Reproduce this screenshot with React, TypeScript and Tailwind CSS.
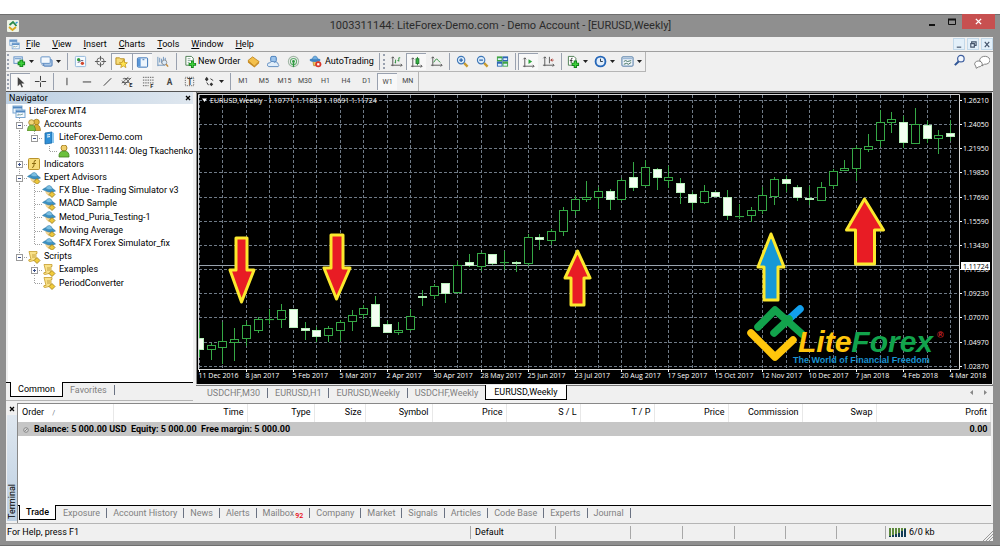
import React from 'react';
import clsx from 'clsx';

const icons: Record<string, React.ReactNode> = {
  newChart: (
    <>
      <rect x="1" y="2" width="9" height="7" fill="#e8f1fa" stroke="#5f8fc4" />
      <path d="M2 4h7" stroke="#5f8fc4" />
      <path d="M9 5v8M5 9h8" stroke="#12801a" strokeWidth="4" />
      <path d="M9 6v6M6 9h6" stroke="#3fd03c" strokeWidth="2" />
    </>
  ),
  profiles: (
    <>
      <rect x="4" y="5" width="9" height="7" rx="1" fill="#a9c6e6" stroke="#4577b5" />
      <rect x="1" y="2" width="10" height="7" rx="1" fill="#f3f8fd" stroke="#5f8fc4" />
      <path d="M2 10l2 2" stroke="#3a6fb0" />
    </>
  ),
  market: (
    <>
      <rect x="1.5" y="1.5" width="11" height="11" rx="1" fill="#f5fafe" stroke="#8fb4da" />
      <circle cx="5" cy="5" r="1.8" fill="#2e9d3d" />
      <circle cx="9" cy="9" r="1.8" fill="#d2452b" />
      <path d="M4 8l3-1M7 6h3" stroke="#557" />
    </>
  ),
  target: (
    <>
      <circle cx="7" cy="7" r="4" fill="none" stroke="#666" />
      <path d="M7 1v5M7 8v5M1 7h5M8 7h5" stroke="#555" />
    </>
  ),
  navigator: (
    <>
      <path d="M1 2h4l1 1h4v6H1z" fill="#f7dd7c" stroke="#b58b1e" />
      <path d="M9 4l1.3 3 3 .3-2.3 2 .8 3.2L9 10.8l-2.8 1.7.8-3.2-2.3-2 3-.3z" fill="#ffe34f" stroke="#bf951a" strokeWidth=".8" />
    </>
  ),
  terminal: (
    <>
      <rect x="1.5" y="2" width="11" height="10" rx="1" fill="#eef5fc" stroke="#2f6cb3" />
      <rect x="2" y="2.5" width="3" height="9" fill="#5a97d8" />
      <path d="M7 4h2" stroke="#2f6cb3" />
    </>
  ),
  tester: (
    <>
      <path d="M2 2v10M2 11h8M4 8V3M6 9V4M8 7V2M10 7V3" stroke="#6c94bd" />
      <circle cx="9" cy="8" r="2.6" fill="#dcebf8" stroke="#8a8f96" />
      <path d="M11 10l2 2.5" stroke="#c28a3b" strokeWidth="1.5" />
    </>
  ),
  order: (
    <>
      <path d="M2 1.5h6l2 2V11H2z" fill="#fff" stroke="#4b7c50" />
      <path d="M4 4h3M4 6h4M4 8h2" stroke="#8a9" />
      <path d="M9 6v8M5 10h8" stroke="#12801a" strokeWidth="3" />
      <path d="M9 7v6M6 10h6" stroke="#3fd03c" strokeWidth="1.5" />
    </>
  ),
  book: (
    <>
      <path d="M1 6l5-4 7 5-5 5z" fill="#f4c04b" stroke="#b37a14" strokeWidth=".8" />
      <path d="M1 6v2l7 5.5L13 9V7l-5 5z" fill="#c8881a" />
    </>
  ),
  cloud: (
    <>
      <rect x="4" y="1.5" width="6" height="6" rx="1.5" fill="#9cc4ec" stroke="#3f78b8" />
      <path d="M2 12.5a2 2 0 0 1 1-4 3 3 0 0 1 5-.5 2.500 2.500 0 0 1 4 2 1.500 1.500 0 0 1 0 2.500z" fill="#e1eefa" stroke="#5a88bd" />
    </>
  ),
  signal: (
    <>
      <circle cx="7" cy="7" r="5.500" fill="none" stroke="#a4b8a8" strokeWidth="1.200" />
      <circle cx="7" cy="7" r="3.300" fill="none" stroke="#5fae6c" strokeWidth="1.200" />
      <circle cx="7" cy="7" r="1.500" fill="#2d9a3f" />
      <path d="M7 8v5" stroke="#2d9a3f" strokeWidth="1.500" />
    </>
  ),
  auto: (
    <>
      <path d="M4 5.500h7l-1 6H5z" fill="#f2c35c" stroke="#a87b1b" strokeWidth=".7" />
      <ellipse cx="6.500" cy="5.500" rx="5.800" ry="2" fill="#3f86c7" />
      <path d="M3.500 5q.5-4 3-4t3 4z" fill="#6faee0" stroke="#2d6ba8" strokeWidth=".5" />
      <circle cx="10" cy="10" r="3.300" fill="#d8372a" />
      <rect x="8.800" y="8.800" width="2.400" height="2.400" fill="#fff" />
    </>
  ),
  bars: (
    <>
      <path d="M3 2v10M1 11h12M1.500 3.500L3 2l1.500 1.500M11.500 9.500L13 11l-1.500 1.500" fill="none" stroke="#555" />
      <path d="M6 9V5M5 8h1M9.500 7V3M8 6h1.500M9.500 3H11" stroke="#2f8f3b" />
    </>
  ),
  candles: (
    <>
      <path d="M3 2v10M1 11h12M1.500 3.500L3 2l1.500 1.500M11.500 9.500L13 11l-1.500 1.500" fill="none" stroke="#555" />
      <path d="M8 1v9" stroke="#1f7a2b" />
      <rect x="6.500" y="3" width="3" height="5" fill="#35b544" stroke="#1f7a2b" />
    </>
  ),
  line: (
    <>
      <path d="M3 2v10M1 11h12M1.500 3.500L3 2l1.500 1.500M11.500 9.500L13 11l-1.500 1.500" fill="none" stroke="#555" />
      <path d="M4 8q3-6 5-2l2 2" fill="none" stroke="#2f8f3b" />
    </>
  ),
  zoomIn: (
    <>
      <path d="M8.500 8.500l4 4" stroke="#c99a2e" strokeWidth="2.500" />
      <circle cx="5.500" cy="5.500" r="4" fill="#dcecfa" stroke="#3f78b8" strokeWidth="1.200" />
      <path d="M5.500 3.500v4M3.500 5.500h4" stroke="#2a62a8" strokeWidth="1.300" />
    </>
  ),
  zoomOut: (
    <>
      <path d="M8.500 8.500l4 4" stroke="#c99a2e" strokeWidth="2.500" />
      <circle cx="5.500" cy="5.500" r="4" fill="#dcecfa" stroke="#3f78b8" strokeWidth="1.200" />
      <path d="M3.500 5.500h4" stroke="#2a62a8" strokeWidth="1.300" />
    </>
  ),
  tile: (
    <>
      <rect x="1" y="1.500" width="6" height="5.500" fill="#3fa544" />
      <rect x="7" y="1.500" width="6" height="5.500" fill="#2d66b5" />
      <rect x="1" y="7" width="6" height="5.500" fill="#2d66b5" />
      <rect x="7" y="7" width="6" height="5.500" fill="#3fa544" />
      <path d="M2 4.500h4M8 4.500h4M2 10.500h4M8 10.500h4" stroke="#dff0ff" strokeWidth="2" />
    </>
  ),
  shift: (
    <>
      <path d="M3 2v10M1 11h12M1.500 3.500L3 2l1.500 1.500M11.500 9.500L13 11l-1.500 1.500" fill="none" stroke="#555" />
      <path d="M7 3.500l4 2.500-4 2.500z" fill="#2fa53d" />
    </>
  ),
  scroll: (
    <>
      <path d="M3 2v10M1 11h12M1.500 3.500L3 2l1.500 1.500M11.500 9.500L13 11l-1.500 1.500M8 2v7" fill="none" stroke="#555" />
      <path d="M12.500 5.500h-3M11 4L9.500 5.500 11 7" fill="none" stroke="#a8342a" />
    </>
  ),
  indicators: (
    <>
      <path d="M1.500 1.500h6l2 2V11h-8z" fill="#fff" stroke="#4b7c50" />
      <path d="M6 3.500q-1.500-.5-1.500 1.500v4M3 6h3" fill="none" stroke="#333" />
      <path d="M9 6v8M5 10h8" stroke="#12801a" strokeWidth="3.500" />
      <path d="M9 7v6M6 10h6" stroke="#3fd03c" strokeWidth="1.500" />
    </>
  ),
  clock: (
    <>
      <circle cx="7" cy="7" r="5.300" fill="#e3eefa" stroke="#2667b8" strokeWidth="2" />
      <path d="M7 4v3h2.500" fill="none" stroke="#234" />
    </>
  ),
  template: (
    <>
      <rect x="1" y="2" width="12" height="10" rx="1" fill="#eef4fa" stroke="#44709f" />
      <path d="M2 4h10" stroke="#7fa4cc" />
      <path d="M3 7l2-1 2 1 4-1M3 10l3-1 2 1 3-2" fill="none" stroke="#3d6f5a" />
    </>
  ),
  cursor: <path d="M4 1v10l2.500-2.300 1.700 3.800 1.500-.7L8 8h3.300z" fill="#444" />,
  cross: <path d="M7 1v5M7 8v5M1 7h5M8 7h5" stroke="#333" />,
  vline: <path d="M7.500 3v8" stroke="#333" />,
  hline: <path d="M3 7.500h9" stroke="#333" />,
  trend: <path d="M3 11.500l8-8" stroke="#333" />,
  channel: (
    <>
      <path d="M1 9l7-7M3 11l8-8M1 6l5 5M4 3l5 5M2 4h8M1 8h8" stroke="#444" strokeWidth=".8" />
      <text x="9" y="13" fontSize="6" fontWeight="bold" fill="#222">E</text>
    </>
  ),
  fibo: (
    <>
      <path d="M1 2.500h12M1 5.500h12M1 8.500h12M1 11.500h6" stroke="#555" strokeDasharray="1.500 1" />
      <text x="9" y="14" fontSize="6" fontWeight="bold" fill="#222">F</text>
    </>
  ),
  textA: <text x="4" y="11" fontSize="9" fontWeight="bold" fill="#444">A</text>,
  textT: (
    <>
      <rect x="2.500" y="2.500" width="9" height="9" fill="none" stroke="#555" strokeDasharray="1 1" />
      <text x="4.500" y="10.500" fontSize="9" fontWeight="bold" fill="#444">T</text>
    </>
  ),
  arrows: (
    <>
      <path d="M4 2l2 2.500L4 7 2 4.500zM9 8l2 2-2 2-2-2z" fill="#333" />
      <path d="M4 8l2 3M8 4l3 2" stroke="#333" />
    </>
  ),
  search: (
    <>
      <circle cx="8.500" cy="5" r="3.500" fill="#f3f8ff" stroke="#3f5f9f" strokeWidth="1.300" />
      <path d="M6 8l-4 4" stroke="#2f5596" strokeWidth="2.200" />
    </>
  ),
  chat: (
    <>
      <path d="M5 5a4.500 3.500 0 1 1 4 4L7 10.500V9q-2-1-2-4z" fill="#fff" stroke="#777" strokeWidth=".8" />
      <path d="M1.500 10.500a3.300 2.600 0 1 1 2.500.8L2 12.500z" fill="#fff" stroke="#777" strokeWidth=".8" />
    </>
  ),
  windows: (
    <>
      <rect x="1" y="1" width="9" height="7" fill="#eaf3fb" stroke="#7ba7d2" />
      <path d="M1 2.500h9" stroke="#4f86c0" strokeWidth="2" />
      <rect x="4" y="5" width="9" height="7.500" fill="#f6faff" stroke="#7ba7d2" />
      <path d="M4 6.500h9" stroke="#4f86c0" strokeWidth="2" />
      <path d="M6 11V9l2 1 3-1" fill="none" stroke="#8aa" />
    </>
  ),
  accounts: (
    <>
      <circle cx="9.500" cy="4" r="2.800" fill="#e0b53c" stroke="#9a7412" strokeWidth=".7" />
      <path d="M6 12.500q0-6 3.500-6t4 6z" fill="#d8a92c" stroke="#9a7412" strokeWidth=".7" />
      <circle cx="4.500" cy="4.500" r="2.800" fill="#f2d67a" stroke="#9a7412" strokeWidth=".7" />
      <path d="M.5 13q0-6 4-6t4 6z" fill="#7cc142" stroke="#4a7f1d" strokeWidth=".7" />
    </>
  ),
  server: (
    <>
      <path d="M3 2l7-1v11l-7 1z" fill="#2e8fd6" stroke="#1c68a5" strokeWidth=".8" />
      <path d="M10 1l2 1v10l-2 0z" fill="#8cc8f0" />
      <path d="M5 4l3-.4M5 6l3-.4" stroke="#fff" />
    </>
  ),
  user: (
    <>
      <circle cx="7" cy="4" r="3" fill="#f0cf6b" stroke="#9a7412" strokeWidth=".8" />
      <path d="M2 13q-.5-6 5-6t5 6z" fill="#6cc03c" stroke="#3f7f1d" strokeWidth=".8" />
    </>
  ),
  func: (
    <>
      <rect x="1.500" y="1.500" width="11" height="11" rx="1" fill="#f7dc7a" stroke="#b8932c" />
      <path d="M9 3.500q-2-.5-2 2V8q0 2.500-2 2.500M5 6.500h4" fill="none" stroke="#8a6a10" />
    </>
  ),
  advisor: (
    <>
      <path d="M3 6.500h6l1 3-3 3-3-3z" fill="#f3d595" />
      <path d="M.5 5.500Q3 3 6.500 3.500q5 .5 7 3.500-4 2-7.500.8T.5 5.500z" fill="#3c93c4" stroke="#246f9c" strokeWidth=".5" />
      <path d="M3.500 4.500q1.500-3.500 4-3t3 4q-4 1-7-1z" fill="#7cc0e2" stroke="#2a74a8" strokeWidth=".5" />
      <path d="M10 7.500l3 3-3 3-3-3z" fill="#ecc63b" stroke="#8f7416" strokeWidth=".8" />
    </>
  ),
  script: (
    <>
      <path d="M2 1.500h8v2H9V10l-6 1.500q-2 0-1-2h2z" fill="#f9e187" stroke="#c59c2c" strokeWidth=".8" />
      <path d="M5 5h3M5 7h3" stroke="#b99232" strokeWidth=".8" />
      <path d="M10 7.500l3 3-3 3-3-3z" fill="#f1cb3a" stroke="#a07c14" strokeWidth=".8" />
    </>
  ),
};

const Icon: React.FC<{ name: string; className?: string }> = ({ name, className }) => (
  <svg viewBox="0 0 14 14" className={clsx('shrink-0', className ?? 'size-[13px]')}>
    {icons[name]}
  </svg>
);

const Caret: React.FC = () => (
  <svg viewBox="0 0 5 3" className="h-[3px] w-[5px] shrink-0">
    <path d="M0 0h5L2.500 3z" fill="#222" />
  </svg>
);

const ToolButton: React.FC<{ icon: string; pressed?: boolean; drop?: boolean; wide?: boolean }> = ({ icon, pressed, drop, wide }) => (
  <button
    type="button"
    aria-label={icon}
    className={clsx(
      'flex h-[17px] items-center justify-center gap-[3px]',
      drop && 'w-[27px]',
      !drop && (wide ? 'w-full' : 'w-5'),
      pressed && 'border-t border-l border-gray-400 bg-[#f8f8f8]',
    )}
  >
    <Icon name={icon} />
    {drop && <Caret />}
  </button>
);

const Separator: React.FC = () => (
  <div className="flex w-[6px] justify-center">
    <div className="h-[17px] w-px bg-gray-400" />
  </div>
);

const Grip: React.FC = () => (
  <div className="flex w-1 justify-center">
    <div className="h-[15px] border-l-2 border-dotted border-gray-400" />
  </div>
);

const menu = ['File', 'View', 'Insert', 'Charts', 'Tools', 'Window', 'Help'];
const frames = ['M1', 'M5', 'M15', 'M30', 'H1', 'H4', 'D1', 'W1', 'MN'];

const TitleBar: React.FC = () => (
  <header className="flex h-[23px] items-start pl-[7px] pr-[5px]">
    <div className="flex h-full items-center">
      <svg viewBox="0 0 12 12" className="size-3">
        <rect width="12" height="12" rx="1" fill="#eef3e6" />
        <path d="M2.500 5l3.500-3 3.500 4" fill="none" stroke="#2b8a4a" strokeWidth="1.800" />
        <path d="M2 7l3.500 3L9 7" fill="none" stroke="#d9a91c" strokeWidth="1.800" />
        <path d="M8.500 3.500L10.500 2" stroke="#2b95d6" strokeWidth="1.500" />
      </svg>
    </div>
    <h1 className="flex-1 pl-[60px] text-center text-[11px] leading-6 text-[#2b2b2b]">
      1003311144: LiteForex-Demo.com - Demo Account - [EURUSD,Weekly]
    </h1>
    <button type="button" aria-label="Minimize" className="flex h-[15px] w-5 items-center justify-center">
      <svg viewBox="0 0 10 10" className="size-[10px]">
        <path d="M2 8h6" stroke="#111" strokeWidth="2" />
      </svg>
    </button>
    <button type="button" aria-label="Maximize" className="flex h-[15px] w-5 items-center justify-center">
      <svg viewBox="0 0 10 10" className="size-[10px]">
        <path d="M1.500 2.500h7v5h-7z" fill="none" stroke="#111" />
        <path d="M1 2.500h8" stroke="#111" strokeWidth="2" />
      </svg>
    </button>
    <button type="button" aria-label="Close" className="flex h-[15px] w-[33px] items-center justify-center bg-[#c75050]">
      <svg viewBox="0 0 8 8" className="size-[7px]">
        <path d="M1 1l6 6M7 1L1 7" stroke="#fff" strokeWidth="1.600" />
      </svg>
    </button>
  </header>
);

const MenuBar: React.FC = () => (
  <nav className="flex h-[15px] items-center border-b border-[#a0a0a0] pl-[3px]">
    <Icon name="windows" className="size-[11px]" />
    <div className="flex flex-1 gap-3 pl-[6px]">
      {menu.map((m) => (
        <button type="button" key={m} className="leading-[13px]">
          <span className="underline">{m[0]}</span>
          {m.slice(1)}
        </button>
      ))}
    </div>
    <div className="flex gap-[2px]">
      {['M2 8h5', 'M3 4V2h5v4H6M2 4h4v4H2z', 'M2 2l5 6M7 2L2 8'].map((d) => (
        <button type="button" key={d} aria-label="Chart window" className="flex h-3 w-3 items-center justify-center border border-[#c3d9ea] bg-[#e3f0fa]">
          <svg viewBox="0 0 9 10" className="h-[9px] w-2">
            <path d={d} fill="none" stroke="#44546b" strokeWidth="1.300" />
          </svg>
        </button>
      ))}
    </div>
  </nav>
);

const Toolbars: React.FC = () => (
  <div className="border-b border-[#555]">
    <div className="flex h-5 items-center">
      <div className="flex h-5 items-center border-r border-b border-[#b5b5b5]">
        <Grip />
        <ToolButton icon="newChart" drop />
        <ToolButton icon="profiles" drop />
        <Separator />
        <div className="grid w-[103px] grid-cols-5">
          <ToolButton icon="market" wide />
          <ToolButton icon="target" wide />
          <ToolButton icon="navigator" wide pressed />
          <ToolButton icon="terminal" wide pressed />
          <ToolButton icon="tester" wide />
        </div>
        <Separator />
        <button type="button" className="flex h-[17px] w-16 items-center gap-px pl-[5px]">
          <Icon name="order" />
          New Order
        </button>
        <ToolButton icon="book" />
        <ToolButton icon="cloud" />
        <ToolButton icon="signal" />
        <button type="button" className="flex h-[17px] w-[73px] items-center gap-[3px] pl-[6px]">
          <Icon name="auto" />
          AutoTrading
        </button>
        <Separator />
        <Grip />
        <ToolButton icon="bars" />
        <ToolButton icon="candles" pressed />
        <ToolButton icon="line" />
        <Separator />
        <ToolButton icon="zoomIn" />
        <ToolButton icon="zoomOut" />
        <ToolButton icon="tile" />
        <Separator />
        <ToolButton icon="shift" pressed />
        <ToolButton icon="scroll" />
        <Separator />
        <ToolButton icon="indicators" drop />
        <ToolButton icon="clock" drop />
        <ToolButton icon="template" drop />
      </div>
      <div className="ml-auto flex gap-2 pr-[3px]">
        <Icon name="search" />
        <Icon name="chat" className="h-4 w-4" />
      </div>
    </div>
    <div className="flex h-[19px] items-center">
      <div className="flex h-[19px] items-center border-r border-[#b5b5b5] text-[7px] text-[#444]">
        <Grip />
        <ToolButton icon="cursor" pressed />
        <ToolButton icon="cross" />
        <Separator />
        <div className="grid w-[144px] grid-cols-7">
          {['vline', 'hline', 'trend', 'channel', 'fibo', 'textA', 'textT'].map((n) => (
            <ToolButton key={n} icon={n} wide />
          ))}
        </div>
        <ToolButton icon="arrows" drop />
        <Separator />
        <div className="grid w-[185px] grid-cols-9">
          {frames.map((f) => (
            <button
              type="button"
              key={f}
              className={clsx('h-[17px] text-center', f === 'W1' && 'border-t border-l border-gray-400 bg-[#f8f8f8]')}
            >
              {f}
            </button>
          ))}
        </div>
      </div>
    </div>
  </div>
);

type Guide = 'none' | 'line' | 'tee' | 'elbow' | 'plus' | 'minus' | 'minusEnd';

const GuideCell: React.FC<{ kind: Guide }> = ({ kind }) => {
  const box = kind === 'plus' || kind === 'minus' || kind === 'minusEnd';
  const end = kind === 'elbow' || kind === 'minusEnd';
  return (
    <svg viewBox="0 0 15 14" className="h-[14px] w-[15px] shrink-0">
      {kind !== 'none' && <path d={end ? 'M7.500 0v7' : 'M7.500 0v14'} stroke="#a0a0a0" strokeDasharray="1 1" />}
      {kind !== 'none' && kind !== 'line' && <path d="M8 7.500h7" stroke="#a0a0a0" strokeDasharray="1 1" />}
      {box && <rect x="4.500" y="4.500" width="6" height="6" fill="#fff" stroke="#9a9a9a" />}
      {box && <path d={kind === 'plus' ? 'M6 7.500h3M7.500 6v3' : 'M6 7.500h3'} stroke="#3a4f8a" />}
    </svg>
  );
};

const tree: { label: string; icon: string; guides: Guide[] }[] = [
  { label: 'LiteForex MT4', icon: 'windows', guides: [] },
  { label: 'Accounts', icon: 'accounts', guides: ['minus'] },
  { label: 'LiteForex-Demo.com', icon: 'server', guides: ['line', 'minusEnd'] },
  { label: '1003311144: Oleg Tkachenko-N', icon: 'user', guides: ['line', 'none', 'elbow'] },
  { label: 'Indicators', icon: 'func', guides: ['plus'] },
  { label: 'Expert Advisors', icon: 'advisor', guides: ['minus'] },
  { label: 'FX Blue - Trading Simulator v3', icon: 'advisor', guides: ['line', 'tee'] },
  { label: 'MACD Sample', icon: 'advisor', guides: ['line', 'tee'] },
  { label: 'Metod_Puria_Testing-1', icon: 'advisor', guides: ['line', 'tee'] },
  { label: 'Moving Average', icon: 'advisor', guides: ['line', 'tee'] },
  { label: 'Soft4FX Forex Simulator_fix', icon: 'advisor', guides: ['line', 'elbow'] },
  { label: 'Scripts', icon: 'script', guides: ['minusEnd'] },
  { label: 'Examples', icon: 'script', guides: ['none', 'plus'] },
  { label: 'PeriodConverter', icon: 'script', guides: ['none', 'elbow'] },
];

const Navigator: React.FC = () => (
  <aside className="mb-[2px] flex w-[187px] shrink-0 flex-col border-b border-[#b5b5b5]">
    <div className="flex h-3 items-center justify-between bg-gradient-to-r from-[#bccfe2] to-[#dfe7ef] pr-px pl-[3px] leading-3">
      <h2>Navigator</h2>
      <button type="button" aria-label="Close navigator" className="flex h-3 w-2 items-center justify-center">
        <svg viewBox="0 0 6 6" className="size-[6px]">
          <path d="M1 1l4 4M5 1L1 5" stroke="#000" strokeWidth="1.300" />
        </svg>
      </button>
    </div>
    <div className="ml-[2px] flex-1 bg-white pt-px pl-1">
      <ul className="grid h-[185px] auto-rows-fr">
        {tree.map((n) => (
          <li key={n.label} className="flex items-center overflow-hidden whitespace-nowrap">
            {n.guides.map((g, i) => (
              <GuideCell key={i} kind={g} />
            ))}
            <Icon name={n.icon} className="mr-[3px] size-[14px]" />
            {n.label}
          </li>
        ))}
      </ul>
    </div>
    <div className="flex h-[18px] items-start border-t border-black">
      <button type="button" className="-mt-px ml-1 h-[15px] w-[53px] border-r border-b border-l border-black bg-white leading-[15px]">
        Common
      </button>
      <button type="button" className="mt-[2px] h-[10px] border-r border-gray-500 px-[7px] leading-[10px] text-[#808080]">Favorites</button>
    </div>
  </aside>
);

// high, body top, body bottom, low; a trailing 1 marks a falling week
const candles: [number, number, number, number, number?][] = [
  [322, 338, 349, 357, 1], [343, 345, 349, 360], [322, 341, 347, 364], [328, 339, 342, 361],
  [321, 325, 338, 346], [317, 319, 330, 333], [309, 319, 319, 324], [304, 310, 319, 328],
  [309, 309, 327, 327, 1], [322, 328, 330, 340, 1], [327, 330, 336, 342, 1], [326, 328, 335, 342],
  [320, 322, 330, 341], [310, 315, 321, 331], [305, 308, 314, 319], [296, 304, 326, 326, 1],
  [321, 324, 332, 333, 1], [322, 330, 332, 335], [309, 316, 329, 331], [290, 296, 297, 306, 1],
  [284, 286, 295, 299], [283, 283, 293, 303, 1], [261, 265, 292, 294], [254, 262, 265, 267, 1],
  [252, 253, 266, 271], [254, 254, 263, 265, 1], [251, 262, 262, 270], [261, 262, 263, 272, 1],
  [234, 237, 263, 266], [234, 237, 239, 250, 1], [229, 231, 240, 245], [207, 210, 231, 236],
  [196, 199, 210, 215], [181, 197, 199, 202], [187, 191, 197, 209], [189, 191, 199, 210, 1],
  [178, 180, 199, 201], [162, 177, 187, 191, 1], [160, 167, 185, 187], [168, 169, 177, 190, 1],
  [166, 177, 180, 188], [178, 183, 192, 204, 1], [192, 194, 202, 210, 1], [185, 191, 202, 204],
  [191, 192, 196, 197, 1], [190, 197, 215, 220, 1], [204, 216, 216, 219], [207, 210, 215, 222],
  [187, 195, 210, 214], [177, 179, 196, 205], [176, 179, 183, 192, 1], [185, 187, 197, 201, 1],
  [186, 198, 199, 205, 1], [182, 187, 200, 201], [169, 171, 185, 189], [160, 168, 170, 171],
  [146, 148, 168, 181], [134, 146, 149, 152], [110, 122, 140, 147], [112, 119, 122, 133],
  [116, 122, 142, 148, 1], [108, 124, 143, 144], [121, 125, 138, 143, 1], [130, 135, 138, 154],
  [120, 133, 136, 141, 1],
];
const prices = ['1.26210', '1.24050', '1.21950', '1.19850', '1.17690', '1.15590', '1.13430', '1.11330', '1.09230', '1.07070', '1.04970', '1.02870'];
const dates = [
  '11 Dec 2016', '8 Jan 2017', '5 Feb 2017', '5 Mar 2017', '2 Apr 2017', '30 Apr 2017', '28 May 2017', '25 Jun 2017', '23 Jul 2017',
  '20 Aug 2017', '17 Sep 2017', '15 Oct 2017', '12 Nov 2017', '10 Dec 2017', '7 Jan 2018', '4 Feb 2018', '4 Mar 2018',
];
const xAt = (i: number) => Math.round(199 + i * 11.735) + 0.5;
const yAt = (i: number) => Math.round(100 + i * 24.16) + 0.5;

const Chart: React.FC = () => (
  <svg viewBox="196 92 797 293" className="block h-auto w-full bg-black" fontFamily="'Open Sans', sans-serif" fontSize="7" fill="#fff">
    <g stroke="#6f7a86" strokeDasharray="3 2">
      {prices.map((p, i) => (
        <path key={p} d={`M199 ${yAt(i)}H959`} />
      ))}
      {Array.from({ length: 33 }, (_, i) => (
        <path key={i} d={`M${xAt(i * 2)} 95V369`} />
      ))}
    </g>
    <path d="M199 265.500H959" stroke="#9aa4ae" />
    <path d="M198.500 369V94.500H959.500V369.500H198" fill="none" stroke="#d8d8d8" />
    <path d="M196.500 385V92.500H993" fill="none" stroke="#8a8a8a" />
    <path d="M992.500 92V384.500H196" fill="none" stroke="#e8e8e8" />
    <svg x="199" y="95" width="760" height="274" viewBox="199 95 760 274">
      {candles.map(([h, t, b, l, down], i) => (
        <g key={i} stroke="#35a845">
          <path d={`M${xAt(i)} ${h}V${t}M${xAt(i)} ${b}V${l}`} />
          <rect x={xAt(i) - 4} y={t + 0.5} width="8" height={Math.max(b - t, 0.1)} fill={down ? '#f4fff2' : '#000'} stroke={down ? '#b8efbb' : '#35a845'} />
        </g>
      ))}
    </svg>
    {prices.map((p, i) => (
      <g key={p}>
        <path d={`M960 ${yAt(i)}h2`} stroke="#fff" />
        <text x="963" y={yAt(i) + 2.500}>{p}</text>
      </g>
    ))}
    <rect x="961" y="262" width="29" height="8" fill="#fff" />
    <text x="963" y="268.500" fill="#000">1.11724</text>
    {dates.map((d, i) => (
      <g key={d}>
        <path d={`M${xAt(i * 4)} 369v3`} stroke="#fff" />
        <text x={xAt(i * 4) - 1} y="378">{d}</text>
      </g>
    ))}
    <path d="M202 98.500h5l-2.500 3.500z" />
    <text x="210" y="103">EURUSD,Weekly</text>
    <text x="268" y="103">1.10771 1.11883 1.10691 1.11724</text>

    <g fill="#e81c24" stroke="#fbe82d" strokeWidth="3" strokeLinejoin="round">
      <path d="M236 238h11v32h7l-12.500 32L230 270h6z" />
      <path d="M331 235h12v33h7l-13.500 31L324 268h7z" />
      <path d="M577.500 251l12.500 27h-6v27h-13v-27h-6z" />
      <path d="M864.500 199l19 31h-9v34h-19v-34h-9z" />
      <path d="M771 234l13 33h-6v33h-14v-33h-6z" fill="#1598d6" />
    </g>

    <g fill="none" strokeWidth="7.500" strokeLinecap="round" strokeLinejoin="round">
      <path d="M789 319l11-10" stroke="#12a0ee" />
      <path d="M758 327l17-17 27 24M774 333l15-14" stroke="#12a34c" />
      <path d="M751 333l24 24 18-17" stroke="#ffc60c" />
    </g>
    <g fontFamily="'Liberation Sans', sans-serif" fontWeight="bold">
      <text x="798" y="352" fontSize="30" fontStyle="italic" fill="#ffc60c">
        Lite<tspan fill="#12a34c">Forex</tspan>
      </text>
      <text x="937" y="338" fontSize="9" fill="#d8262c">®</text>
      <text x="793" y="363" fontSize="9" fill="#1a94d2">The World of Financial Freedom</text>
    </g>
  </svg>
);

const chartTabs = ['USDCHF,M30', 'EURUSD,H1', 'EURUSD,Weekly', 'USDCHF,Weekly'];

const ChartTabs: React.FC = () => (
  <div className="flex h-[18px] items-start border-t border-[#777] pl-1">
    {chartTabs.map((t, i) => (
      <button
        type="button"
        key={t}
        className={clsx('mt-[2px] h-[10px] px-[7px] leading-[10px] text-[#808080]', i < chartTabs.length - 1 && 'border-r border-gray-500')}
      >
        {t}
      </button>
    ))}
    <button type="button" className="-mt-px h-[15px] border-r border-b border-l border-black bg-white px-2 leading-[15px]">
      EURUSD,Weekly
    </button>
    <svg viewBox="0 0 20 6" className="mt-1 mr-1 ml-auto h-[6px] w-5">
      <path d="M4 0v5L1 2.500zM15 0v5l3-2.500z" fill="#888" />
    </svg>
  </div>
);

const columns = [
  { label: 'Time', width: 'w-[134px]' },
  { label: 'Type', width: 'w-[67px]' },
  { label: 'Size', width: 'w-[51px]' },
  { label: 'Symbol', width: 'w-[67px]' },
  { label: 'Price', width: 'w-[74px]' },
  { label: 'S / L', width: 'w-[74px]' },
  { label: 'T / P', width: 'w-[74px]' },
  { label: 'Price', width: 'w-[74px]' },
  { label: 'Commission', width: 'w-[74px]' },
  { label: 'Swap', width: 'w-[74px]' },
  { label: 'Profit', width: '' },
];
const terminalTabs = ['Exposure', 'Account History', 'News', 'Alerts', 'Mailbox', 'Company', 'Market', 'Signals', 'Articles', 'Code Base', 'Experts', 'Journal'];

const Terminal: React.FC = () => (
  <section className="flex border-b border-[#b5b5b5]">
    <div className="flex w-[11px] shrink-0 flex-col items-center">
      <button type="button" aria-label="Close terminal" className="flex h-3 w-[10px] items-center justify-center">
        <svg viewBox="0 0 6 6" className="size-[6px]">
          <path d="M1 1l4 4M5 1L1 5" stroke="#000" strokeWidth="1.300" />
        </svg>
      </button>
      <div className="mb-[2px] flex w-[10px] flex-1 items-center bg-gradient-to-b from-[#dfe7ef] to-[#bccfe2] pb-[2px]">
        <h2 className="mt-auto rotate-180 [writing-mode:vertical-rl] leading-[10px]">Terminal</h2>
      </div>
    </div>
    <div className="min-w-0 flex-1 border-t border-l border-[#888]">
      <div className="mr-[2px] h-[101px] bg-white">
        <table className="w-full table-fixed border-collapse">
          <thead>
            <tr className="h-[18px]">
              <th className="w-[95px] border-r border-[#e8e8e8] pl-1 text-left font-normal">
                Order <span className="pl-[6px] text-[7px] text-gray-500">/</span>
              </th>
              {columns.map((c, i) => (
                <th key={i} className={clsx('border-r border-[#e8e8e8] pr-[3px] text-right font-normal', c.width)}>
                  {c.label}
                </th>
              ))}
            </tr>
          </thead>
          <tbody>
            <tr className="h-[14px] bg-[#c6c6c6] font-bold leading-[14px]">
              <td colSpan={11} className="whitespace-pre pl-[5px]">
                <svg viewBox="0 0 6 6" className="mr-[5px] inline size-[6px]">
                  <circle cx="3" cy="3" r="2.300" fill="#ddd" stroke="#888" />
                  <path d="M1.500 4.500l3-3" stroke="#888" />
                </svg>
                {'Balance: 5 000.00 USD  Equity: 5 000.00  Free margin: 5 000.00'}
              </td>
              <td className="pr-[3px] text-right">0.00</td>
            </tr>
          </tbody>
        </table>
      </div>
      <div className="mr-[2px] flex h-[18px] items-start border-t border-black text-[#808080]">
        <button type="button" className="-mt-px mr-px ml-px h-[15px] w-[37px] border-r border-b border-l border-black bg-white font-medium leading-[15px] text-black">
          Trade
        </button>
        {terminalTabs.map((t) => (
          <button type="button" key={t} className="mt-[2px] h-[10px] border-r border-gray-500 px-[6px] leading-[10px]">
            {t}
            {t === 'Mailbox' && <sub className="pl-px text-[7px] font-medium text-red-600">92</sub>}
          </button>
        ))}
      </div>
    </div>
  </section>
);

const StatusBar: React.FC = () => (
  <footer className="flex h-[17px] items-center pl-px">
    <p className="flex-1">For Help, press F1</p>
    <p className="flex h-[13px] w-[85px] items-center border-l border-[#a8a8a8] pl-1">Default</p>
    {['w-[75px]', 'w-[52px]', 'w-[52px]', 'w-[51px]', 'w-[51px]', 'w-[49px]'].map((w, i) => (
      <div key={i} className={clsx('h-[13px] border-l border-[#a8a8a8]', w)} />
    ))}
    <p className="flex h-[13px] w-[98px] items-center gap-[3px] border-l border-[#a8a8a8] pl-[3px]">
      <svg viewBox="0 0 17 9" className="h-[9px] w-[17px]">
        <path d="M1 0v9M4 0v9M7 0v9M10 0v9M13 0v9M16 0v9" stroke="#5d8a3c" strokeWidth="2" />
        <path d="M1 8v1M4 7v2M7 6v3M10 5v4M13 3v6M16 1v8" stroke="#123c56" strokeWidth="2" />
      </svg>
      6/0 kb
    </p>
    <svg viewBox="0 0 10 10" className="size-[10px] self-end">
      <path d="M0 10L10 0M3 10l7-7M6 10l4-4" stroke="#999" />
    </svg>
  </footer>
);

const App: React.FC = () => (
  <div className="min-h-screen w-full bg-white pt-[14px] font-['Roboto',sans-serif] text-[9px] text-black">
    <div className="border-t border-b border-[#6f6f6f] bg-[#8f8f8f]">
      <div className="-mt-px">
        <TitleBar />
      </div>
      <main className="mr-[7px] mb-1 ml-[6px] bg-[#f0f0f0]">
        <MenuBar />
        <Toolbars />
        <div className="flex gap-[3px]">
          <Navigator />
          <div className="min-w-0 flex-1">
            <Chart />
            <ChartTabs />
          </div>
        </div>
        <Terminal />
        <StatusBar />
      </main>
    </div>
  </div>
);

export default App;
